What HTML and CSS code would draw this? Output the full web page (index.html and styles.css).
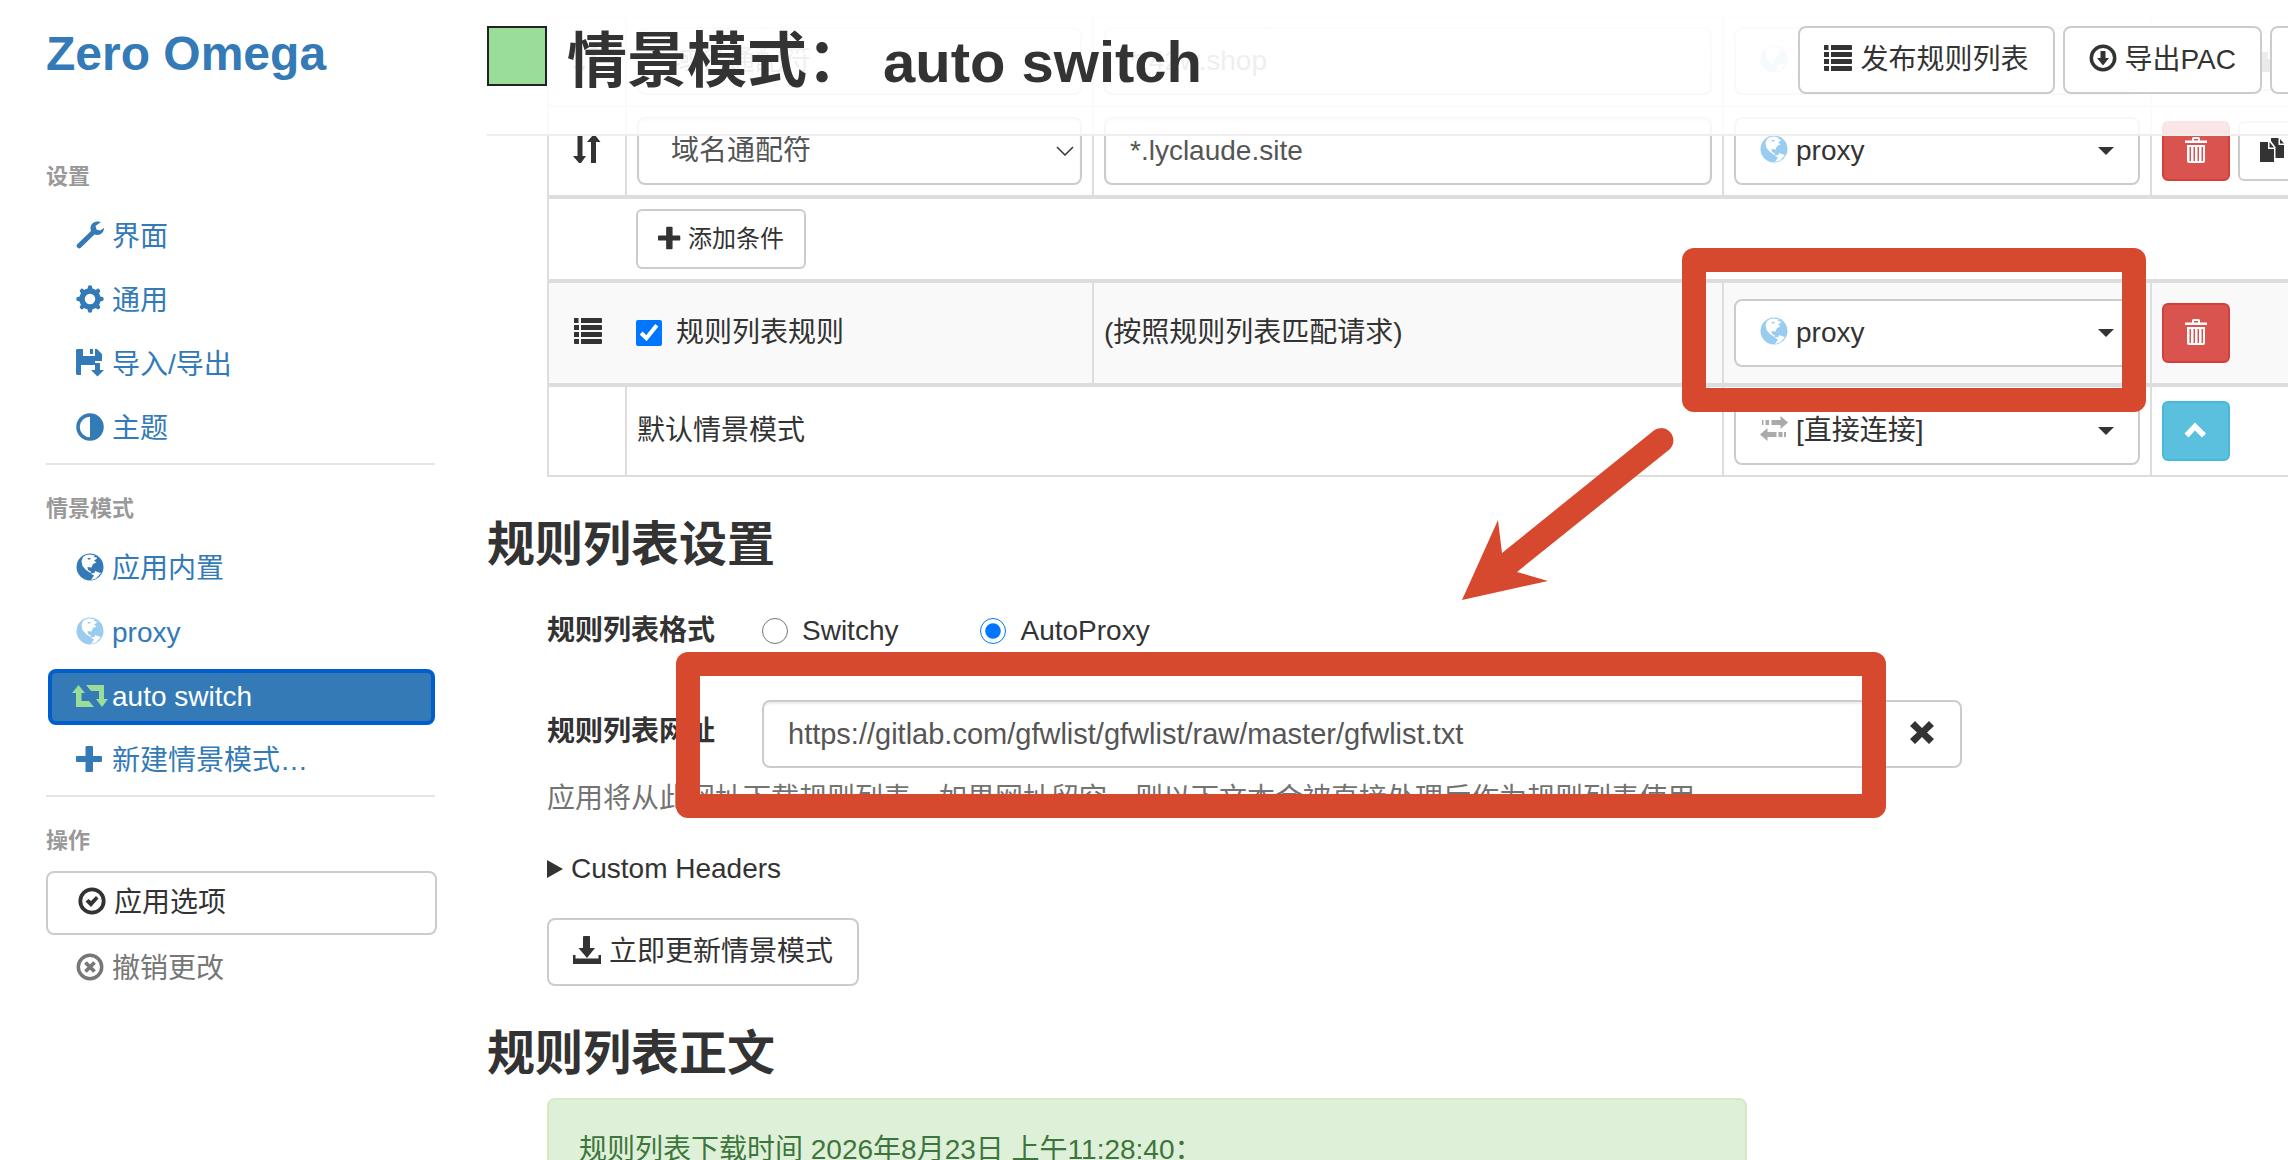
FILE: index.html
```html
<!DOCTYPE html>
<html lang="zh-CN">
<head>
<meta charset="utf-8">
<meta name="viewport" content="width=device-width, initial-scale=1.0">
<title>Zero Omega</title>
<link rel="stylesheet" href="styles.css">
</head>
<body>
<svg class="sprite" aria-hidden="true">
  <symbol id="i-wrench" viewBox="0 0 28 28"><path d="M25 1C20-1 14 2 14.500 8L15 10 1 23.500C-.5 25.500 2.500 28.500 4.500 27L18.500 13.500C24 15 28 12 28 7L24 9.500 20.500 8.500 19.500 5Z"/></symbol>
  <symbol id="i-cog" viewBox="0 0 28 28"><circle cx="14" cy="14" r="8" fill="none" stroke="currentColor" stroke-width="5.500"/><path d="M14 2.500v3M14 22.500v3M2.500 14h3M22.500 14h3M6 6l2 2M20 20l2 2M6 22l2-2M20 8l2-2" stroke="currentColor" stroke-width="4.500" stroke-linecap="round"/></symbol>
  <symbol id="i-save" viewBox="0 0 28 28"><path d="M1 0H7V7H19V0H21L26 5V12H19V16H5V26H1L0 25V1ZM14 0H17V5H14ZM19 14H24V21H28L21.500 27.500 15 21H19Z"/></symbol>
  <symbol id="i-adjust" viewBox="0 0 28 28"><circle cx="14" cy="14" r="12" fill="none" stroke="currentColor" stroke-width="3.500"/><path d="M14 2A12 12 0 0 1 14 26Z"/></symbol>
  <symbol id="i-globe" viewBox="0 0 28 28"><circle cx="14" cy="14" r="13.500"/><path d="M5.500 8 7 4 10 2 14 1.500 19 2.500 17.500 4 21 4.500 20.500 6 18 7.500 20.500 9.500 17 11 15.500 14.500 11.500 14 12 17 15 18.500 14.500 20 10 17 6.500 13ZM14.500 20.500 18.500 20 19 18 23 19.500 25 20 20 25.500 15 27 18 22.500Z" fill="#fff"/><path d="M11.500 5h3.500l-1 1.500h-2z"/></symbol>
  <symbol id="i-retweet" viewBox="0 0 36 24"><path d="M6.500 0 13 8H9.500V16H17L22 22H4V8H0ZM14 0H32V14H36L30 22 24 14H27V6H19Z"/></symbol>
  <symbol id="i-plus" viewBox="0 0 28 28"><path d="M11 1H16Q17 1 17 2V11H25Q26 11 26 12V16Q26 17 25 17H17V26Q17 27 16 27H10Q9.500 27 9.500 26V17H1Q0 17 0 16V12Q0 11 1 11H9.500V2Q9.500 1 11 1Z"/></symbol>
  <symbol id="i-ok" viewBox="0 0 28 28"><circle cx="14" cy="14" r="11.700" fill="none" stroke="currentColor" stroke-width="3.800"/><path d="M7.500 14.500 10.500 12 13 14 18 9 20.500 11.500 13 20Z"/></symbol>
  <symbol id="i-cancel" viewBox="0 0 28 28"><circle cx="14" cy="14" r="11.700" fill="none" stroke="currentColor" stroke-width="3.500"/><path d="M9.500 9.500l9 9M18.500 9.500l-9 9" stroke="currentColor" stroke-width="3.800"/></symbol>
  <symbol id="i-list" viewBox="0 0 28 28"><path d="M0 1.500q0-.5.5-.5h4v5h-4q-.5 0-.5-.5zM7 1h20q1 0 1 1v3q0 1-1 1H7zM0 8h5v5H0zM7 8h20q1 0 1 1v3q0 1-1 1H7zM0 15h5v5H0zM7 15h20q1 0 1 1v3q0 1-1 1H7zM0 22h5v5H1q-1 0-1-1zM7 22h20q1 0 1 1v3q0 1-1 1H7z"/></symbol>
  <symbol id="i-download" viewBox="0 0 28 28"><circle cx="14" cy="14" r="11.700" fill="none" stroke="currentColor" stroke-width="3.500"/><path d="M11.500 7h5v7H20l-6 7.500L8 14h3.500z"/></symbol>
  <symbol id="i-sort" viewBox="0 0 28 28"><path d="M4.500 0h5v21H13L8 28H6L0 21h4.500zM18 28h5V7h4.500L22 0h-2L14 7h4z"/></symbol>
  <symbol id="i-trash" viewBox="0 0 24 26"><path d="M8 3.500V1.500Q8 0 9.500 0h5Q16 0 16 1.500V3.500H23V6H1V3.500zM10 3.500h4V2h-4zM3 8h18v16q0 2-2 2H5q-2 0-2-2zM5.500 10v14h1.500V10zM9.500 10v14H11V10zM13.500 10v14H15V10zM17.500 10v14H19V10z" fill-rule="evenodd"/></symbol>
  <symbol id="i-copy" viewBox="0 0 24 24"><path d="M0 4H8V11H14V24H0ZM9.500 4 14 9.500H9.500ZM11 0H18.500V7H24V20H15.500V9L11 3ZM20 1 24 5.500H20Z"/></symbol>
  <symbol id="i-up" viewBox="0 0 24 24"><path d="M11 4.500 22 15.500 18 19.500 11 12.500 4.500 19.500.5 15.500Z"/></symbol>
  <symbol id="i-transfer" viewBox="0 0 28 28"><path d="M20.500 1 28 7.500 20.500 14V10H11.500V5H20.500ZM2 5H3.500V10H2ZM5.500 5H9V10H5.500ZM7.500 13 0 19.500 7.500 26V22H16.500V17H7.500ZM18.500 17H22.500V22H18.500ZM24 17H26V22H24Z"/></symbol>
  <symbol id="i-import" viewBox="0 0 28 28"><path d="M10.500 0h6q.5 0 .5 1V12H22L14 22 5.500 12H10V1zM0 19H2.500V22.500H25.500V19H28V28H0Z"/></symbol>
  <symbol id="i-remove" viewBox="0 0 28 28"><path d="M7 3 14 10 21 3 26 8 19 14.500 26 21 21 26 14 19 7 26 2 21 9 14.500 2 8Z"/></symbol>
</svg>

<div class="layout">
  <nav class="sidebar">
    <h1 class="brand"><a href="#">Zero Omega</a></h1>

    <h2 class="nav-title">设置</h2>
    <ul class="nav-list">
      <li><a href="#ui"><svg class="icon"><use href="#i-wrench"/></svg>界面</a></li>
      <li><a href="#general"><svg class="icon"><use href="#i-cog"/></svg>通用</a></li>
      <li><a href="#io"><svg class="icon"><use href="#i-save"/></svg>导入/导出</a></li>
      <li><a href="#theme"><svg class="icon"><use href="#i-adjust"/></svg>主题</a></li>
    </ul>

    <h2 class="nav-title">情景模式</h2>
    <ul class="nav-list">
      <li><a href="#builtin"><svg class="icon"><use href="#i-globe"/></svg>应用内置</a></li>
      <li><a href="#proxy"><svg class="icon icon-proxy"><use href="#i-globe"/></svg>proxy</a></li>
      <li><a class="active" href="#auto"><svg class="icon icon-switch"><use href="#i-retweet"/></svg>auto switch</a></li>
      <li><a href="#new"><svg class="icon"><use href="#i-plus"/></svg>新建情景模式…</a></li>
    </ul>

    <h2 class="nav-title">操作</h2>
    <button class="action action-apply" type="button"><svg class="icon"><use href="#i-ok"/></svg>应用选项</button>
    <button class="action action-revert" type="button"><svg class="icon"><use href="#i-cancel"/></svg>撤销更改</button>
  </nav>

  <main class="main">
    <header class="page-header">
      <span class="profile-color"></span>
      <h2 class="page-title">情景模式：<span class="profile-name">auto switch</span></h2>
      <div class="page-actions">
        <button class="btn" type="button"><svg class="icon"><use href="#i-list"/></svg>发布规则列表</button>
        <button class="btn" type="button"><svg class="icon"><use href="#i-download"/></svg>导出PAC</button>
        <button class="btn" type="button" aria-label="重命名"></button>
      </div>
    </header>

    <div class="content">
      <table class="rules">
        <colgroup><col class="col-sort"><col class="col-type"><col><col class="col-profile"><col class="col-actions"></colgroup>
        <tbody>
          <tr>
            <td class="sort"><svg class="icon"><use href="#i-sort"/></svg></td>
            <td><select class="control" aria-label="条件类型"><option>域名通配符</option></select></td>
            <td><input class="control" type="text" aria-label="条件设置" value="*.42w.shop"></td>
            <td><button class="btn dropdown" type="button"><svg class="icon icon-proxy"><use href="#i-globe"/></svg>proxy<span class="caret"></span></button></td>
            <td><div class="row-actions">
              <button class="btn btn-sm btn-danger" type="button" aria-label="删除"><svg class="icon"><use href="#i-trash"/></svg></button>
              <button class="btn btn-sm" type="button" aria-label="复制"><svg class="icon"><use href="#i-copy"/></svg></button>
            </div></td>
          </tr>
          <tr>
            <td class="sort"><svg class="icon"><use href="#i-sort"/></svg></td>
            <td><select class="control" aria-label="条件类型"><option>域名通配符</option></select></td>
            <td><input class="control" type="text" aria-label="条件设置" value="*.lyclaude.site"></td>
            <td><button class="btn dropdown" type="button"><svg class="icon icon-proxy"><use href="#i-globe"/></svg>proxy<span class="caret"></span></button></td>
            <td><div class="row-actions">
              <button class="btn btn-sm btn-danger" type="button" aria-label="删除"><svg class="icon"><use href="#i-trash"/></svg></button>
              <button class="btn btn-sm" type="button" aria-label="复制"><svg class="icon"><use href="#i-copy"/></svg></button>
            </div></td>
          </tr>
        </tbody>
        <tbody>
          <tr>
            <td class="open-right"></td>
            <td class="open-left" colspan="4"><button class="btn btn-sm" type="button"><svg class="icon"><use href="#i-plus"/></svg>添加条件</button></td>
          </tr>
        </tbody>
        <tbody>
          <tr class="rule-list">
            <td class="sort open-right"><svg class="icon"><use href="#i-list"/></svg></td>
            <td class="open-left"><label class="check"><input type="checkbox" checked>规则列表规则</label></td>
            <td>(按照规则列表匹配请求)</td>
            <td><button class="btn dropdown" type="button"><svg class="icon icon-proxy"><use href="#i-globe"/></svg>proxy<span class="caret"></span></button></td>
            <td><div class="row-actions">
              <button class="btn btn-sm btn-danger" type="button" aria-label="删除"><svg class="icon"><use href="#i-trash"/></svg></button>
            </div></td>
          </tr>
        </tbody>
        <tbody>
          <tr>
            <td></td>
            <td colspan="2">默认情景模式</td>
            <td><button class="btn dropdown" type="button"><svg class="icon icon-direct"><use href="#i-transfer"/></svg>[直接连接]<span class="caret"></span></button></td>
            <td><div class="row-actions">
              <button class="btn btn-sm btn-info" type="button" aria-label="上移"><svg class="icon"><use href="#i-up"/></svg></button>
            </div></td>
          </tr>
        </tbody>
      </table>

      <h3 class="section-title">规则列表设置</h3>
      <div class="form-row format-row" role="radiogroup" aria-labelledby="format-label">
        <span class="form-label" id="format-label">规则列表格式</span>
        <label class="radio"><input type="radio" name="format">Switchy</label>
        <label class="radio"><input type="radio" name="format" checked>AutoProxy</label>
      </div>
      <div class="form-row url-row">
        <label class="form-label" for="list-url">规则列表网址</label>
        <div class="input-group">
          <input class="control" id="list-url" type="text" value="https://gitlab.com/gfwlist/gfwlist/raw/master/gfwlist.txt">
          <button class="btn" type="button" aria-label="清除"><svg class="icon"><use href="#i-remove"/></svg></button>
        </div>
      </div>
      <p class="help">应用将从此网址下载规则列表。如果网址留空，则以下文本会被直接处理后作为规则列表使用。</p>
      <details class="headers"><summary>Custom Headers</summary></details>
      <button class="btn" type="button"><svg class="icon"><use href="#i-import"/></svg>立即更新情景模式</button>

      <h3 class="section-title">规则列表正文</h3>
      <div class="alert">规则列表下载时间 2026年8月23日 上午11:28:40：</div>
    </div>
  </main>
</div>

<!-- tutorial marks over the page -->
<div class="mark mark-profile"></div>
<div class="mark mark-url"></div>
<svg class="mark-arrow" viewBox="0 0 216 172"><path d="M0 172 36 92 40 125 190 4A12 12 0 0 1 208 21L55 144 86 153Z"/></svg>
</body>
</html>
```
FILE: styles.css
```css
* {
  box-sizing: border-box;
}

body {
  margin: 0;
  height: 100vh;
  position: relative;
  overflow: hidden;
  background: #fff;
  color: #333;
  font-family: "Liberation Sans", "Noto Sans CJK SC", sans-serif;
  font-size: 28px;
  line-height: 40px;
}

a {
  color: #337ab7;
  text-decoration: none;
}

button,
input,
select {
  font: inherit;
  color: inherit;
}

.sprite {
  display: none;
}

.icon {
  width: 28px;
  height: 28px;
  flex: none;
  margin-bottom: 4px;
  fill: currentColor;
}

.icon-proxy {
  color: #9ce;
}

.icon-direct {
  color: #aaa;
}

.layout {
  display: flex;
  height: 100%;
}

/* sidebar */
.sidebar {
  width: 437px;
  flex: none;
  padding: 24px 0 0 46px;
}

.brand {
  margin: 0 0 77px;
  font-size: 48px;
  line-height: 60px;
}

.nav-title {
  margin: 0;
  padding-bottom: 8px;
  color: #999;
  font-size: 22px;
  line-height: 32px;
}

.nav-list {
  list-style: none;
  margin: 0 2px 28px 0;
  padding: 0 0 6px;
  border-bottom: 2px solid #e5e5e5;
}

.nav-list a {
  display: flex;
  align-items: center;
  gap: 8px;
  height: 56px;
  margin: 8px 0 0 2px;
  padding: 0 28px;
  border-radius: 8px;
}

.nav-list a.active {
  padding: 0 20px;
  gap: 4px;
  border: 4px solid #005fcc;
  background: #337ab7;
  color: #fff;
}

.icon-switch {
  width: 36px;
  height: 24px;
  margin-bottom: 0;
  color: #9d9;
}

.action {
  display: flex;
  align-items: center;
  gap: 8px;
  width: 100%;
  height: 64px;
  padding: 0 30px;
  border: 0;
  background: none;
}

.action-apply {
  margin-top: 6px;
  margin-bottom: 2px;
  border: 2px solid #ccc;
  border-radius: 8px;
}

.action-revert {
  color: #777;
}

/* page header, floats over the scrolled rules */
.main {
  position: relative;
  flex: 1;
  min-width: 0;
  margin-left: 50px;
  overflow: hidden;
}

.page-header {
  position: absolute;
  top: 0;
  left: 0;
  right: 0;
  z-index: 1;
  display: flex;
  align-items: flex-start;
  height: 136px;
  padding-top: 26px;
  border-bottom: 2px solid #eee;
  background: linear-gradient(rgba(255, 255, 255, .95), rgba(255, 255, 255, .85));
}

.profile-color {
  width: 60px;
  height: 60px;
  border: 2px solid #222;
  background: #9d9;
}

.page-title {
  margin: 0 0 0 20px;
  font-size: 60px;
  line-height: 72px;
}

.profile-name {
  margin-left: 16px;
  font-size: 58px;
}

.page-actions {
  display: flex;
  gap: 8px;
  margin-left: auto;
  margin-right: -62px;
}

/* controls */
.btn {
  display: inline-flex;
  align-items: center;
  gap: 8px;
  min-width: 80px;
  min-height: 68px;
  padding: 12px 24px;
  border: 2px solid #ccc;
  border-radius: 8px;
  background: #fff;
}

.btn-sm {
  gap: 6px;
  min-width: 68px;
  min-height: 60px;
  padding: 10px 20px;
  border-radius: 6px;
  font-size: 24px;
  line-height: 36px;
}

.btn-sm .icon {
  width: 24px;
  height: 26px;
  margin-bottom: 2px;
}

.btn-danger {
  border-color: #d43f3a;
  background: #d9534f;
  color: #fff;
}

.btn-info {
  border-color: #46b8da;
  background: #5bc0de;
  color: #fff;
}

.dropdown {
  width: 100%;
}

.caret {
  margin-left: auto;
  border: 8px solid transparent;
  border-top-color: currentColor;
  border-bottom: 0;
}

.control {
  display: block;
  width: 100%;
  height: 68px;
  padding: 12px 24px;
  border: 2px solid #ccc;
  border-radius: 8px;
  background: #fff;
  box-shadow: inset 0 2px 2px rgba(0, 0, 0, .075);
  color: #555;
}

select.control {
  appearance: none;
  padding-left: 32px;
  background: #fff url("data:image/svg+xml,%3Csvg xmlns='http://www.w3.org/2000/svg' width='18' height='10'%3E%3Cpath d='M1 1l8 8 8-8' fill='none' stroke='%23333' stroke-width='1.5'/%3E%3C/svg%3E") no-repeat right 6px center;
}

/* rules table */
.content {
  padding: 15px 0 0;
}

.content > * {
  margin-left: 60px;
}

.rules {
  width: calc(100% + 40px);
  table-layout: fixed;
  border-collapse: collapse;
}

.col-sort {
  width: 78px;
}

.col-type {
  width: 467px;
}

.col-profile {
  width: 428px;
}

.col-actions {
  width: 236px;
}

.rules td {
  padding: 10px;
  border: 2px solid #ddd;
}

.rules tbody + tbody {
  border-top: 4px solid #ddd;
}

.rules .open-right {
  border-right: 0;
}

.rules .open-left {
  border-left: 0;
}

.rules .btn {
  vertical-align: top;
}

.sort .icon {
  display: block;
  margin: 0 auto 4px;
}

.rule-list {
  background: #f9f9f9;
}

.rules .rule-list td {
  padding: 16px 10px;
}

.row-actions {
  display: flex;
  gap: 8px;
}

.check {
  display: flex;
  align-items: center;
  gap: 14px;
}

.check input,
.radio input {
  width: 26px;
  height: 26px;
  margin: 0;
  accent-color: #0075ff;
}

/* rule list settings */
.content > .section-title {
  margin: 40px 0 16px;
  font-size: 48px;
  line-height: 56px;
}

.form-row {
  display: flex;
  align-items: center;
}

.form-label {
  width: 215px;
  flex: none;
  font-weight: bold;
}

.format-row {
  padding: 22px 0 49px;
}

.url-row .form-label {
  padding-bottom: 4px;
}

.radio {
  display: flex;
  align-items: center;
  gap: 14px;
  margin-right: 82px;
}

.input-group {
  display: flex;
  flex: 1;
  max-width: 1200px;
}

.input-group .control {
  border-radius: 8px 0 0 8px;
  font-size: 29px;
}

.input-group .btn {
  margin-left: -2px;
  border-radius: 0 8px 8px 0;
}

.help {
  margin-top: 11px;
  margin-bottom: 30px;
  color: #737373;
}

.headers {
  margin-bottom: 29px;
}

.headers summary {
  display: flex;
  align-items: center;
  gap: 8px;
}

.headers summary::before {
  content: "";
  border: 9px solid transparent;
  border-left: 16px solid currentColor;
  border-right: 0;
}

.alert {
  max-width: 1200px;
  padding: 30px;
  border: 2px solid #d6e9c6;
  border-radius: 8px;
  background: #dff0d8;
  color: #3c763d;
}

/* tutorial marks */
.mark,
.mark-arrow {
  position: absolute;
  z-index: 2;
  pointer-events: none;
}

.mark::before {
  content: "";
  position: absolute;
  inset: 0;
  border: 24px solid #d7492e;
  border-radius: 12px;
}

.mark-profile {
  left: 1682px;
  top: 248px;
  width: 464px;
  height: 164px;
}

.mark-url {
  left: 676px;
  top: 652px;
  width: 1210px;
  height: 166px;
}

.mark-arrow {
  left: 1462px;
  top: 428px;
  width: 216px;
  height: 172px;
  fill: #d7492e;
}
```
